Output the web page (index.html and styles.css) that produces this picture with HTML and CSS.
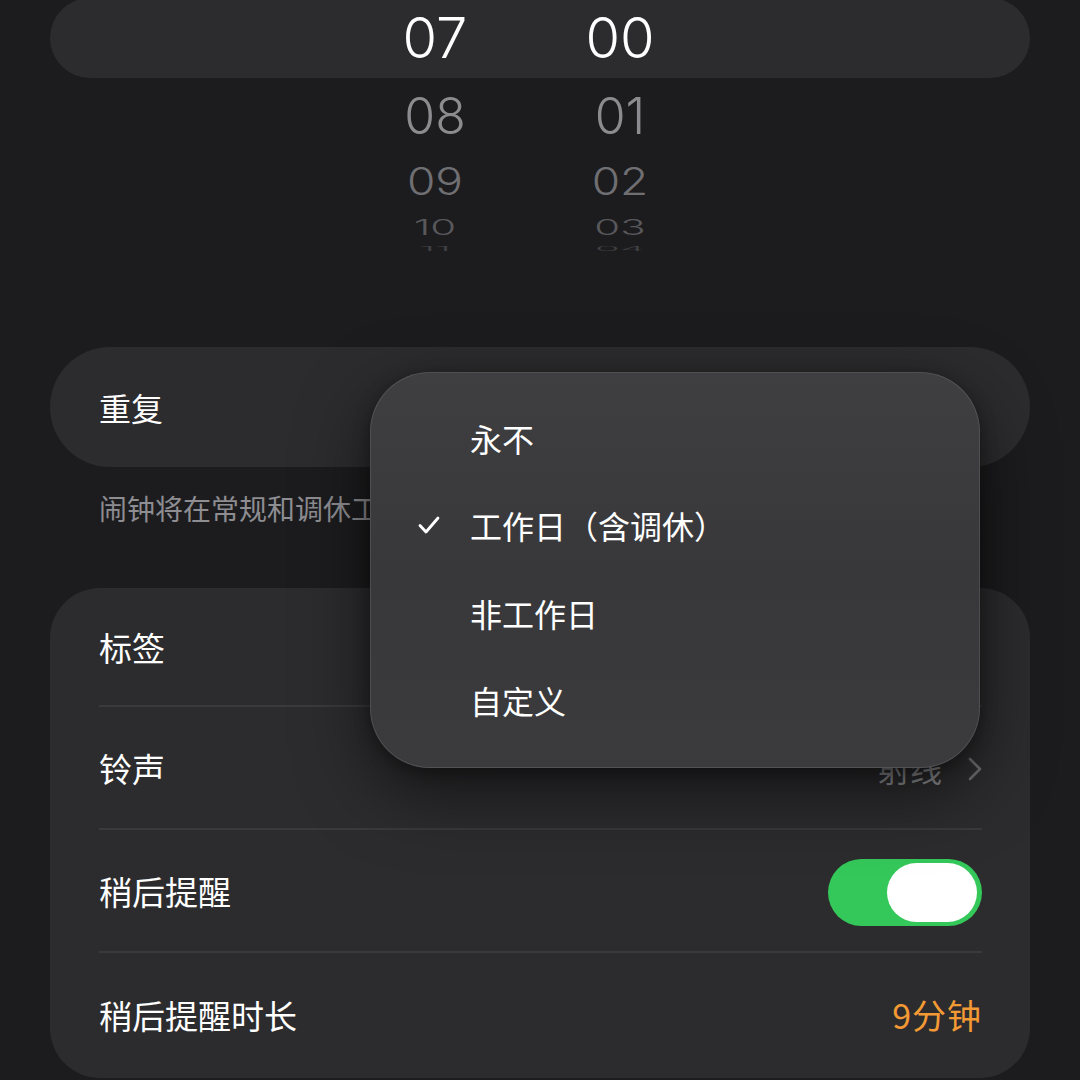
FILE: index.html
```html
<!DOCTYPE html>
<html lang="zh-CN">
<head>
<meta charset="utf-8">
<title>闹钟</title>
<link rel="stylesheet" href="styles.css">
</head>
<body>
<div class="screen">
  <section class="picker">
    <div class="wheel-row band">
      <span class="num">07</span><span class="num">00</span>
    </div>
    <div class="wheel-row r1">
      <span class="num">08</span><span class="num">01</span>
    </div>
    <div class="wheel-row r2">
      <span class="num">09</span><span class="num">02</span>
    </div>
    <div class="wheel-row r3">
      <span class="num">10</span><span class="num">03</span>
    </div>
    <div class="wheel-row r4">
      <span class="num">11</span><span class="num">04</span>
    </div>
  </section>

  <section class="card repeat">
    <div class="label">重复</div>
  </section>
  <p class="note">闹钟将在常规和调休工作日响铃</p>

  <section class="card list">
    <div class="row"><div class="row-inner"><span class="label">标签</span></div></div>
    <div class="row"><div class="row-inner">
      <span class="label">铃声</span>
      <span class="value">射线
        <svg class="chev" width="14" height="24" viewBox="0 0 14 24"><path d="M2 2 L12 12 L2 22" fill="none" stroke="currentColor" stroke-width="2.6" stroke-linecap="round" stroke-linejoin="round"/></svg>
      </span>
    </div></div>
    <div class="row"><div class="row-inner">
      <span class="label">稍后提醒</span>
      <span class="toggle"><span class="knob"></span></span>
    </div></div>
    <div class="row last"><div class="row-inner">
      <span class="label">稍后提醒时长</span>
      <span class="value orange">9分钟</span>
    </div></div>
  </section>

  <div class="menu">
    <div class="item"><span class="check"></span>永不</div>
    <div class="item"><span class="check">
      <svg width="24" height="20" viewBox="0 0 24 20"><path d="M3 10.5 L9 17 L21 3" fill="none" stroke="#fff" stroke-width="2.8" stroke-linecap="round" stroke-linejoin="round"/></svg>
    </span>工作日（含调休）</div>
    <div class="item"><span class="check"></span>非工作日</div>
    <div class="item"><span class="check"></span>自定义</div>
  </div>
</div>
</body>
</html>
```
FILE: styles.css
```css
html, body {
  margin: 0;
  padding: 0;
  background: #1c1c1e;
}

.screen {
  position: relative;
  width: 1080px;
  height: 1080px;
  overflow: hidden;
  background: #1c1c1e;
  color: #ffffff;
  font-family: "Noto Sans CJK SC", "Noto Sans", sans-serif;
}

/* time wheel */
.picker {
  height: 347px;
  display: flex;
  flex-direction: column;
}

.wheel-row {
  display: flex;
  align-items: center;
  padding-left: 375px;
  gap: 65px;
  font-family: "Inter", "Noto Sans", sans-serif;
  font-weight: 300;
}

.num {
  width: 120px;
  text-align: center;
  line-height: 1;
}

.band {
  margin: -2px 50px 0;
  padding-left: 325px;
  height: 80px;
  border-radius: 40px;
  background: #2c2c2e;
  font-size: 56px;
  font-weight: 300;
  color: #ffffff;
}

.r1 { height: 76px; font-size: 50px; color: #8c8c90; }
.r2 { height: 54px; font-size: 46px; color: #6f6f73; }
.r2 .num { transform: scaleY(0.82); }
.r3 { height: 38px; font-size: 42px; color: #58585c; }
.r3 .num { transform: scaleY(0.52); }
.r4 { height: 6px; font-size: 40px; color: #404044; overflow: hidden; }
.r4 .num { transform: scaleY(0.14); }

/* grouped cards */
.card {
  margin: 0 50px;
  background: #2c2c2e;
}

.label {
  font-size: 33px;
  color: #ffffff;
}

.repeat {
  height: 120px;
  border-radius: 60px;
  display: flex;
  align-items: center;
  padding-left: 49px;
}

.repeat .label { font-size: 32px; }

.note {
  margin: 0;
  height: 121px;
  padding: 22px 0 0 99px;
  box-sizing: border-box;
  font-size: 28px;
  color: #8d8d92;
  line-height: 38px;
}

.list {
  border-radius: 50px;
  height: 490px;
  padding: 0 48px 0 49px;
}

.row {
  height: 123px;
}
.row:first-child { height: 119px; }

.row-inner {
  height: 100%;
  display: flex;
  align-items: center;
  justify-content: space-between;
  border-bottom: 2px solid #3a3a3c;
  box-sizing: border-box;
}
.row.last .row-inner { border-bottom: none; }

.value {
  font-size: 32px;
  color: #8e8e93;
  display: flex;
  align-items: center;
  gap: 26px;
}
.chev { color: #6d6d72; margin-top: 2px; }

.orange {
  color: #f39a34;
  font-size: 34px;
  letter-spacing: 1px;
}

.toggle {
  width: 154px;
  height: 67px;
  margin-top: 4px;
  border-radius: 34px;
  background: #34c759;
  display: flex;
  align-items: center;
  justify-content: flex-end;
  padding-right: 5px;
  box-sizing: border-box;
}
.knob {
  width: 90px;
  height: 59px;
  border-radius: 30px;
  background: #ffffff;
}

/* repeat options popover */
.menu {
  position: absolute;
  left: 370px;
  top: 372px;
  width: 610px;
  height: 396px;
  box-sizing: border-box;
  border-radius: 60px;
  background: linear-gradient(180deg, #3f3f42 0%, #38383b 50%, #3b3b3e 100%);
  border: 1.5px solid rgba(255, 255, 255, 0.1);
  box-shadow: 0 24px 70px rgba(0, 0, 0, 0.55), 0 4px 16px rgba(0, 0, 0, 0.35);
  padding-top: 21px;
}

.item {
  height: 87.5px;
  display: flex;
  align-items: center;
  font-size: 32px;
  color: #ffffff;
}

.check {
  width: 99px;
  padding-left: 46px;
  box-sizing: border-box;
  display: flex;
  align-items: center;
}
```
